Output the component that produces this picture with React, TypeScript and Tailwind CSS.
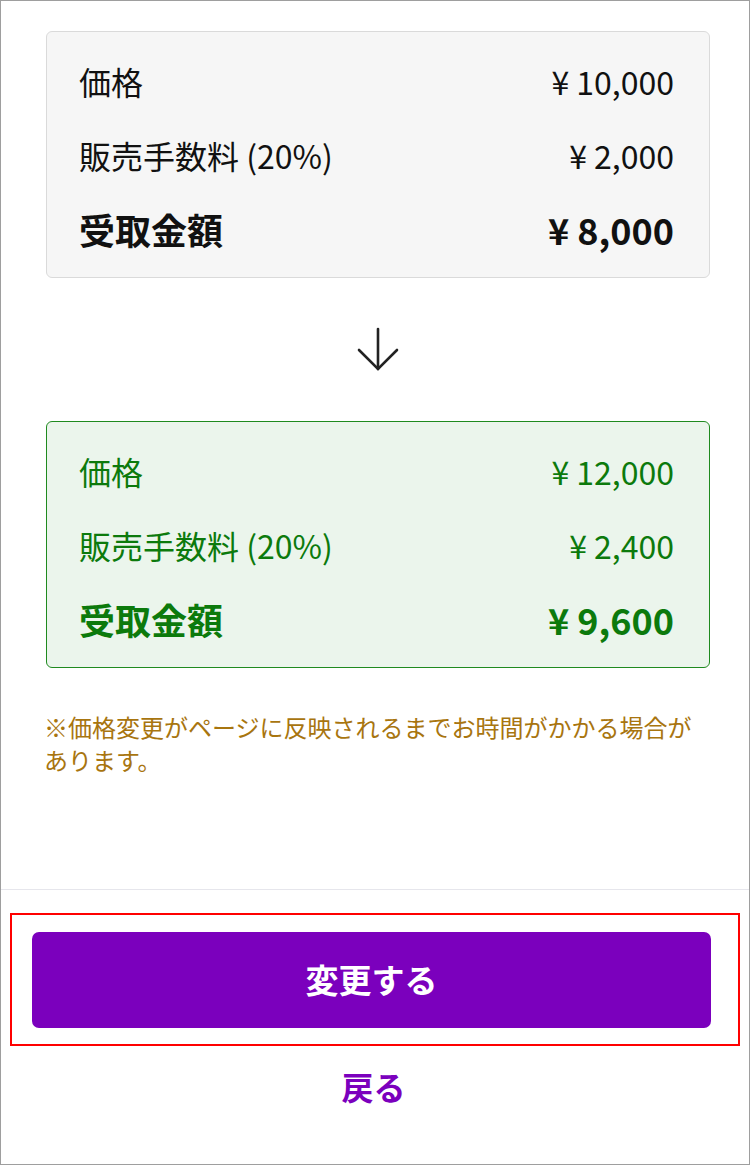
import React from "react";

type Row = { label: string; value: string; total?: boolean };

const BEFORE: Row[] = [
  { label: "価格", value: "¥ 10,000" },
  { label: "販売手数料 (20%)", value: "¥ 2,000" },
  { label: "受取金額", value: "¥ 8,000", total: true },
];

const AFTER: Row[] = [
  { label: "価格", value: "¥ 12,000" },
  { label: "販売手数料 (20%)", value: "¥ 2,400" },
  { label: "受取金額", value: "¥ 9,600", total: true },
];

function PriceCard({ rows, tone }: { rows: Row[]; tone: "gray" | "green" }) {
  const box =
    tone === "gray"
      ? "bg-[#f6f6f6] border-[#dadada] text-[#111]"
      : "bg-[#ebf5ec] border-[#1f8a1f] text-[#0c7a0c]";
  return (
    <div className={`ml-[45px] w-[664px] h-[247px] rounded-[6px] border pt-[12px] pl-[32px] pr-[35px] ${box}`}>
      {rows.map((r) => (
        <div key={r.label} className="flex h-[74px] items-center justify-between">
          <span className={r.total ? "text-[36px] font-bold" : "text-[32px]"}>{r.label}</span>
          <span className={r.total ? "text-[36px] font-bold" : "text-[32px]"}>{r.value}</span>
        </div>
      ))}
    </div>
  );
}

export default function App() {
  return (
    <div
      className="w-[750px] h-[1165px] border border-[#9e9e9e] bg-white flex flex-col"
      style={{ fontFamily: '"Noto Sans CJK JP", "Noto Sans", sans-serif' }}
    >
      <div className="pt-[30px]">
        <PriceCard rows={BEFORE} tone="gray" />
      </div>

      <div className="h-[143px] flex items-center justify-center">
        <svg width="44" height="48" viewBox="0 0 44 48" className="ml-[6px] mb-[2px]" fill="none" stroke="#222" strokeWidth="2.6" strokeLinecap="round">
          <path d="M22 4 V44" />
          <path d="M3 25 L22 44 L41 25" />
        </svg>
      </div>

      <PriceCard rows={AFTER} tone="green" />

      <p className="ml-[43px] w-[668px] mt-[42px] text-[24px] leading-[33px] text-[#a8750f]">
        ※価格変更がページに反映されるまでお時間がかかる場合があります。
      </p>

      <div className="mt-[113px] h-px bg-[#e6e6ec]" />

      <div className="mt-[23px] ml-[9px] w-[730px] h-[133px] border-2 border-[#ff0000] pt-[17px] pl-[20px]">
        <button className="w-[679px] h-[96px] rounded-[7px] bg-[#7b00bd] text-white text-[33px] font-bold flex items-center justify-center">
          変更する
        </button>
      </div>

      <div className="mt-[19px] h-[42px] flex items-center justify-center text-[#7b00bd] text-[32px] font-bold pr-[3px]">
        戻る
      </div>
    </div>
  );
}
